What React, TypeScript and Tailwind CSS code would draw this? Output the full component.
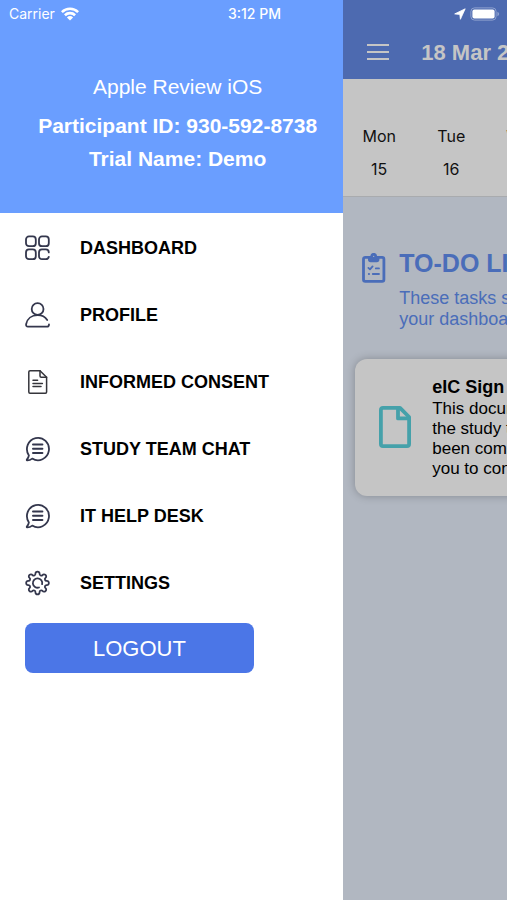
import { ReactNode } from 'react';

const gearPath = () => {
  const point = (radius: number, degrees: number) => {
    const angle = (degrees * Math.PI) / 180;
    return `${(radius * Math.cos(angle)).toFixed(2)} ${(radius * Math.sin(angle)).toFixed(2)}`;
  };
  let d = `M${point(9.2, -13)}`;
  for (let tooth = 0; tooth < 360; tooth += 45) {
    d += `C${point(12.4, tooth - 12)} ${point(12.4, tooth + 12)} ${point(9.2, tooth + 13)}`;
    d += `A1.7 1.7 0 0 0 ${point(9.2, tooth + 32)}`;
  }
  return d + 'Z';
};

const MenuIcon = ({ viewBox = '0 0 26 26', children }: { viewBox?: string; children: ReactNode }) => (
  <svg
    viewBox={viewBox}
    className="size-[26px] shrink-0"
    fill="none"
    stroke="#34374d"
    strokeWidth="1.8"
    strokeLinecap="round"
    strokeLinejoin="round"
    aria-hidden="true"
  >
    {children}
  </svg>
);

const DashboardIcon = () => (
  <MenuIcon>
    <rect x="2" y="1.4" width="9.8" height="9.8" rx="3" />
    <rect x="15" y="1.4" width="9.8" height="9.8" rx="3" />
    <rect x="2" y="14.4" width="9.8" height="9.8" rx="3" />
    <path d="M24.8 17.4a3 3 0 0 0-3-3h-3.8a3 3 0 0 0-3 3v3.8a3 3 0 0 0 3 3h3.8a3 3 0 0 0 3-2.4" />
  </MenuIcon>
);

const ProfileIcon = () => (
  <MenuIcon>
    <circle cx="13.6" cy="7" r="5.9" />
    <path d="M23.2 18C21.2 14.9 17.8 13.2 13.6 13.2C7.6 13.2 3.2 16.7 2.1 22.2Q1.8 24.6 4 24.6H23Q25 24.6 25 22.4" />
  </MenuIcon>
);

const ConsentIcon = () => (
  <MenuIcon>
    <g stroke="#35353b" strokeWidth="1.5">
      <path d="M16 1.7H6Q4.8 1.7 4.8 2.9V23.1Q4.8 24.3 6 24.3H21.4Q22.6 24.3 22.6 23.1V8.2Z" />
      <path d="M16 1.7V7Q16 8.2 17.2 8.2H22.6" />
      <path d="M9 11.3H13.6M9 14.4H18.4M9 17.5H17" />
    </g>
  </MenuIcon>
);

const ChatIcon = () => (
  <MenuIcon>
    <path d="M4.9 19.4A11 11.2 0 1 1 8.2 22.6Q5.8 24.4 3.2 24.3Q2.4 24.1 3 23.4Q4.6 21.6 4.9 19.4Z" />
    <path strokeWidth="2" d="M9 8.6H18.4M9 12.8H18.4M9 17H18.4" />
  </MenuIcon>
);

const SettingsIcon = () => (
  <MenuIcon viewBox="-13.5 -13 26 26">
    <path d={gearPath()} />
    <path d="M1.5 4.5A4.7 4.7 0 1 1 4.6 1.2" />
  </MenuIcon>
);

const menuItems = [
  { label: 'DASHBOARD', icon: <DashboardIcon /> },
  { label: 'PROFILE', icon: <ProfileIcon /> },
  { label: 'INFORMED CONSENT', icon: <ConsentIcon /> },
  { label: 'STUDY TEAM CHAT', icon: <ChatIcon /> },
  { label: 'IT HELP DESK', icon: <ChatIcon /> },
  { label: 'SETTINGS', icon: <SettingsIcon /> },
];

const days = [
  { name: 'Mon', date: 15 },
  { name: 'Tue', date: 16 },
  { name: 'Wed', date: 17 },
];

const StatusBar = () => (
  <div className="absolute inset-x-0 top-0 z-10 grid grid-cols-3 items-center h-7 pl-[9px] pr-[7px] font-['Inter',sans-serif] text-sm text-white">
    <div className="flex items-center gap-1.5">
      <span>Carrier</span>
      <svg viewBox="0 0 18 14" className="w-[18px] h-[14px]" fill="none" stroke="white" aria-hidden="true">
        <path strokeWidth="2.6" d="M.9 5.1A11.6 11.6 0 0 1 17.1 5.1M3.9 8.2A7.3 7.3 0 0 1 14.1 8.2" />
        <path fill="white" stroke="none" d="M9 13.6L5.9 10.4A4.5 4.5 0 0 1 12.1 10.4Z" />
      </svg>
    </div>
    <span className="text-center font-medium">3:12 PM</span>
    <div className="flex items-center justify-end gap-1">
      <svg viewBox="0 0 12 12" className="size-3" fill="white" stroke="white" strokeLinejoin="round" aria-hidden="true">
        <path strokeWidth=".8" d="M11.2.8L.7 5.9L5.8 6.4L6.4 11.3Z" />
      </svg>
      <svg viewBox="0 0 30 14" className="w-[30px] h-[14px]" fill="none" aria-hidden="true">
        <rect x=".9" y=".9" width="25.2" height="12.2" rx="3.6" stroke="#8fa2cf" />
        <rect x="2.4" y="2.4" width="22.2" height="9.2" rx="2" fill="white" />
        <path d="M27.4 4.8Q29.2 5.5 29.2 7T27.4 9.2Z" fill="#8fa2cf" />
      </svg>
    </div>
  </div>
);

const Drawer = () => (
  <aside className="w-[67.7%] shrink-0 bg-white">
    <div className="flex flex-col items-center pl-3 pt-[70px] pb-[38px] bg-[#6a9eff] text-[21px] text-white">
      <p className="leading-[33px] mb-1.5">Apple Review iOS</p>
      <p className="leading-[33px] font-bold">Participant ID: 930-592-8738</p>
      <p className="leading-[33px] font-bold">Trial Name: Demo</p>
    </div>
    <nav className="pt-px">
      {menuItems.map((item) => (
        <a key={item.label} href="#" className="flex items-center gap-[30px] h-[67px] pl-6 text-lg font-bold text-black">
          {item.icon}
          {item.label}
        </a>
      ))}
    </nav>
    <button type="button" className="block w-2/3 h-[50px] mt-[7px] ml-[25px] rounded-lg bg-[#4b76e7] text-[22px] text-white">
      LOGOUT
    </button>
  </aside>
);

const Dashboard = () => (
  <main className="flex-1 min-w-0 overflow-hidden whitespace-nowrap bg-[#b1b7c1]">
    <header className="flex items-center gap-8 h-[79px] pt-[26px] pl-6 bg-[#4d6ab0] text-[#c5c5c5]">
      <button type="button" aria-label="Menu" className="shrink-0">
        <svg viewBox="0 0 22 18" className="w-[22px] h-[18px]" stroke="currentColor" strokeWidth="2" aria-hidden="true">
          <path d="M0 1H22M0 8H22M0 15H22" />
        </svg>
      </button>
      <h1 className="text-[22px] font-bold">18 Mar 2021</h1>
    </header>
    <div className="flex h-[118px] pt-[41px] border-b border-[#a9abae] bg-[#c5c5c5] font-['Inter',sans-serif] text-base text-[#111111]">
      {days.map((day) => (
        <div key={day.name} className="w-[72px] shrink-0 text-center leading-[33px]">
          <div>{day.name}</div>
          <div>{day.date}</div>
        </div>
      ))}
    </div>
    <section className="flex gap-[13px] pt-[50px] pl-[19px] text-[#4a6db9]">
      <svg
        viewBox="0 0 24 30"
        className="w-6 h-[30px] mt-1.5 shrink-0"
        fill="none"
        stroke="currentColor"
        strokeLinecap="round"
        strokeLinejoin="round"
        aria-hidden="true"
      >
        <rect x="1.5" y="4.3" width="20.4" height="24" rx="1.8" strokeWidth="2.8" />
        <path fill="currentColor" stroke="none" d="M6 3.2H8.4A3.3 3.3 0 0 1 15 3.2H17.4V6.6Q17.4 9.2 14.8 9.2H8.6Q6 9.2 6 6.6Z" />
        <circle cx="11.7" cy="3.4" r=".6" fill="#b1b7c1" stroke="none" />
        <path strokeWidth="1.8" d="M6.4 14.9L8 16.4L10.6 13.4M13.8 15.4H17M6.8 21H7.1M10.8 21H17" />
      </svg>
      <div>
        <h2 className="text-[25px] leading-8 font-bold">TO-DO LIST</h2>
        <p className="mt-[9px] text-lg leading-[21px]">
          These tasks should show on
          <br />
          your dashboard
        </p>
      </div>
    </section>
    <article className="flex items-center gap-[21px] w-80 mt-[29px] ml-3 pl-6 pt-4 pb-[17px] rounded-xl bg-[#c5c5c5] shadow-[0_0_8px_rgba(0,0,0,0.25)] text-black">
      <svg
        viewBox="0 0 32 42"
        className="w-8 h-[42px] shrink-0"
        fill="none"
        stroke="#45a1aa"
        strokeWidth="3.8"
        strokeLinejoin="round"
        aria-hidden="true"
      >
        <path d="M21 1.9H4Q1.9 1.9 1.9 4V38Q1.9 40.1 4 40.1H28Q30.1 40.1 30.1 38V11Z" />
        <path d="M19 2V12.4H30" />
      </svg>
      <div>
        <h3 className="text-lg leading-6 font-bold">eIC Sign Off</h3>
        <p className="text-[17px] leading-5">
          This document is for
          <br />
          the study team. It has
          <br />
          been completed for
          <br />
          you to confirm
        </p>
      </div>
    </article>
  </main>
);

const App = () => {
  return (
    <div className="relative flex min-h-screen overflow-hidden font-['Liberation_Sans',Arial,sans-serif]">
      <StatusBar />
      <Drawer />
      <Dashboard />
    </div>
  );
};

export default App;
